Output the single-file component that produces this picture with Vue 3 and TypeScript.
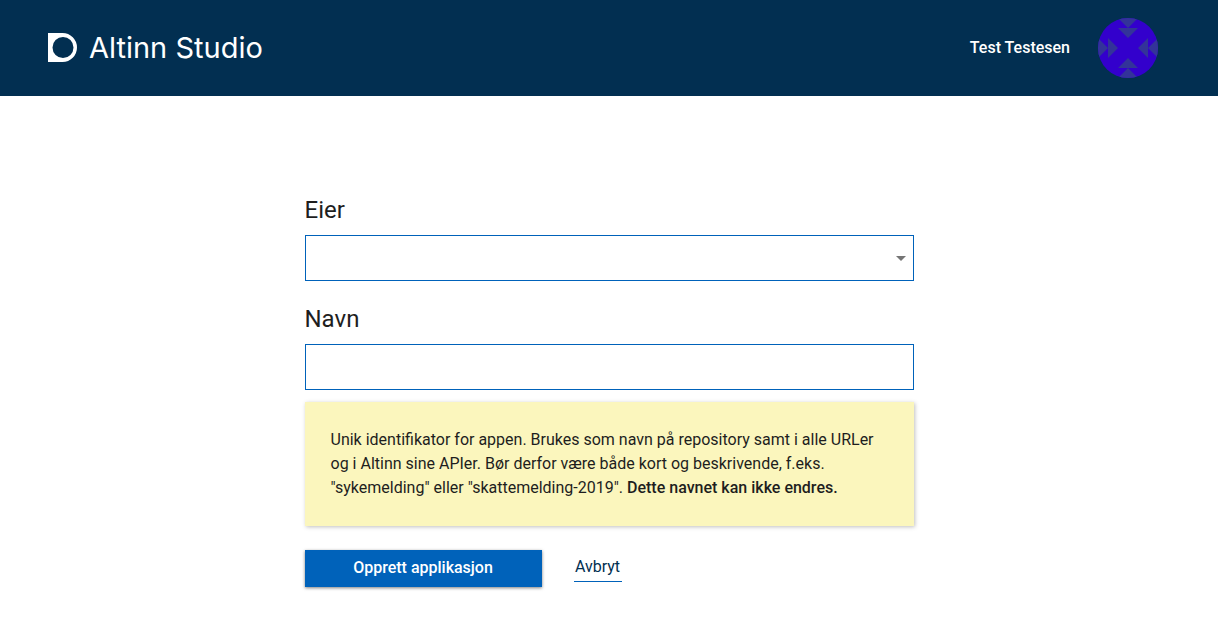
<script setup lang="ts">
import { ref } from 'vue'

const userName = 'Test Testesen'
const owner = ref('')
const name = ref('')

function cancel(): void {
  owner.value = ''
  name.value = ''
}
</script>

<template>
  <div class="page">
    <header class="header">
      <a class="brand" href="#">
        <svg class="brand-mark" viewBox="0 0 30 30" aria-hidden="true">
          <path fill-rule="evenodd" d="M0 0H14.5A14.5 14.5 0 0 1 14.5 29H0ZM15 4A10.5 10.5 0 1 0 15 25A10.5 10.5 0 1 0 15 4Z" />
        </svg>
        <span class="brand-name">Altinn Studio</span>
      </a>
      <div class="user">
        <span>{{ userName }}</span>
        <button class="avatar" type="button" aria-label="Profil">
          <svg viewBox="0 0 60 60" aria-hidden="true">
            <rect width="60" height="60" fill="#3300cc" />
            <g fill="#333399">
              <path d="M20 0H40L30 10ZM20 10H40L30 20Z" />
              <path d="M60 20V40L50 30ZM50 20V40L40 30Z" />
              <path d="M20 60H40L30 50ZM20 50H40L30 40Z" />
              <path d="M0 20V40L10 30ZM10 20V40L20 30Z" />
            </g>
          </svg>
        </button>
      </div>
    </header>

    <main class="content">
      <form class="form" @submit.prevent>
        <div class="field">
          <label for="owner">Eier</label>
          <div class="select">
            <select id="owner" v-model="owner" class="control">
              <option value=""></option>
              <option value="test">{{ userName }}</option>
            </select>
            <svg class="arrow" viewBox="0 0 24 24" aria-hidden="true"><path d="M7 10l5 5 5-5z" /></svg>
          </div>
        </div>
        <div class="field">
          <label for="name">Navn</label>
          <input id="name" v-model="name" class="control" type="text" aria-describedby="name-help" />
        </div>
        <p id="name-help" class="help">
          Unik identifikator for appen. Brukes som navn på repository samt i alle URLer og i Altinn sine APIer. Bør derfor være både kort og beskrivende, f.eks. "sykemelding" eller "skattemelding-2019". <strong>Dette navnet kan ikke endres.</strong>
        </p>
        <div class="actions">
          <button class="submit" type="submit">Opprett applikasjon</button>
          <a class="cancel" href="#" @click.prevent="cancel">Avbryt</a>
        </div>
      </form>
    </main>
  </div>
</template>

<style>
body {
  background: #ffffff;
}
</style>

<style scoped>
.page {
  color: #1e2b3c;
  font-family: Roboto, "Liberation Sans", sans-serif;
  font-size: 16px;
  line-height: 24px;
}

.header {
  display: flex;
  align-items: center;
  justify-content: space-between;
  height: 96px;
  padding: 0 60px 0 48px;
  box-sizing: border-box;
  background: #022f51;
  color: #ffffff;
}

.brand {
  display: flex;
  align-items: center;
  gap: 11px;
  color: inherit;
  text-decoration: none;
}

.brand-mark {
  width: 30px;
  height: 30px;
  fill: #ffffff;
}

.brand-name {
  font-family: Inter, "Liberation Sans", sans-serif;
  font-size: 29px;
  line-height: 32px;
}

.user {
  display: flex;
  align-items: center;
  gap: 28px;
  font-weight: 500;
}

.avatar {
  width: 60px;
  height: 60px;
  padding: 0;
  overflow: hidden;
  border: 0;
  border-radius: 50%;
  background: none;
  cursor: pointer;
}

.avatar svg {
  display: block;
  width: 100%;
}

.content {
  padding: 96px 25% 48px;
}

.field {
  margin-bottom: 20px;
}

.field label {
  display: block;
  margin-bottom: 7px;
  font-size: 24px;
  line-height: 36px;
  color: #1e1e1e;
}

.control {
  display: block;
  width: 100%;
  height: 46px;
  padding: 0 12px;
  box-sizing: border-box;
  border: 1px solid #0062ba;
  border-radius: 0;
  outline: 0;
  background: #ffffff;
  color: inherit;
  font: inherit;
  appearance: none;
}

.select {
  position: relative;
}

.arrow {
  position: absolute;
  top: 50%;
  right: 1px;
  width: 24px;
  height: 24px;
  margin-top: -12px;
  fill: #757575;
  pointer-events: none;
}

.help {
  margin: -8px 0 24px;
  padding: 26px;
  background: #fbf6bd;
  color: #1e1e1e;
  box-shadow: 1px 1px 4px rgba(0, 0, 0, 0.25);
}

.help strong {
  font-weight: 500;
}

.actions {
  display: flex;
  align-items: flex-start;
  gap: 32px;
}

.submit {
  min-width: 237px;
  height: 37px;
  padding: 0 44px 2px;
  border: 0;
  background: #0062ba;
  box-shadow: 0 1px 3px rgba(0, 0, 0, 0.5);
  color: #ffffff;
  font: inherit;
  font-weight: 500;
  cursor: pointer;
}

.cancel {
  min-width: 48px;
  margin-top: 5px;
  padding-bottom: 2px;
  border-bottom: 1px solid #0062ba;
  color: #022f51;
  text-align: center;
  text-decoration: none;
}
</style>
